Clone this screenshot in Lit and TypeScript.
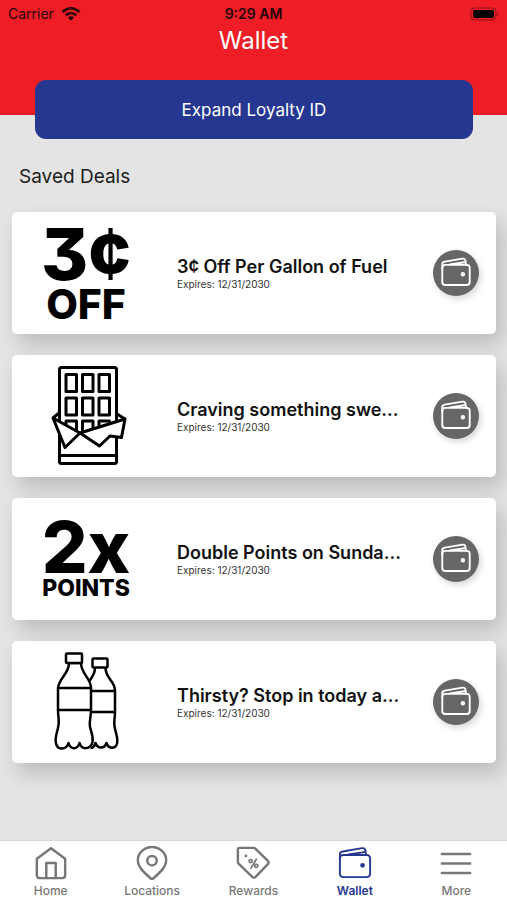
import { LitElement, html, css, svg, nothing } from "lit";
import { customElement, property } from "lit/decorators.js";

type Art = "cents" | "chocolate" | "points" | "bottles";
interface Deal {
  title: string;
  expires: string;
  art: Art;
}

const DEALS: Deal[] = [
  { title: "3¢ Off Per Gallon of Fuel", expires: "12/31/2030", art: "cents" },
  { title: "Craving something swe...", expires: "12/31/2030", art: "chocolate" },
  { title: "Double Points on Sunda...", expires: "12/31/2030", art: "points" },
  { title: "Thirsty? Stop in today a...", expires: "12/31/2030", art: "bottles" },
];

const wallet = svg`
  <rect x="2" y="9.500" width="32" height="23.500" rx="3.500"/>
  <path d="M2 14V8.500Q2 6.300 5 5.800L25.500 2.300q3-.4 3.500 2.200l.8 5"/>
  <path d="M11 9 28 6.500"/>
  <circle cx="26" cy="20.500" r="1.500" fill="currentColor"/>`;

const TABS = [
  {
    label: "Home",
    icon: svg`<path d="M3 13.500 18 2.500l15 11V31a3 3 0 0 1-3 3H6a3 3 0 0 1-3-3z"/><path d="M13 34V18h10v16"/>`,
  },
  {
    label: "Locations",
    icon: svg`<path d="M18 35.500C10 28.500 3 22.500 3 15a15 14 0 0 1 30 0C33 22.500 26 28.500 18 35.500z"/><circle cx="18" cy="15.500" r="5"/>`,
  },
  {
    label: "Rewards",
    icon: svg`<path d="M2 3.500a1.500 1.500 0 0 1 1.500-1.500H18a4 4 0 0 1 3 1.200L33.500 15.500a2.500 2.500 0 0 1 0 4L21 32.500a2.500 2.500 0 0 1-4 0L3 19A3.500 3.500 0 0 1 2 16.500z"/>
      <circle cx="10.500" cy="10.500" r="1.500" fill="currentColor" stroke="none"/><g stroke-width="1.800"><circle cx="15.500" cy="16" r="1.700"/><circle cx="21.500" cy="21" r="1.700"/><path d="M21.500 14 16 23.500"/></g>`,
  },
  { label: "Wallet", icon: wallet },
  { label: "More", icon: svg`<path d="M3 8.500h30M3 18.500h30M3 28.500h30"/>` },
];

@customElement("deal-card")
class DealCard extends LitElement {
  @property({ attribute: false }) deal!: Deal;

  static styles = css`
    :host {
      display: block;
    }
    .card {
      display: grid;
      grid-template-columns: 148px 1fr 46px;
      align-items: center;
      column-gap: 17px;
      height: 122px;
      padding-right: 17px;
      box-sizing: border-box;
      background: #fff;
      border-radius: 5px;
      box-shadow: 6px 10px 20px rgba(0, 0, 0, 0.18);
    }
    .art {
      display: flex;
      flex-direction: column;
      align-items: center;
      color: #000;
      font-weight: 800;
      white-space: nowrap;
    }
    .art svg {
      width: 120px;
      height: 122px;
    }
    .top {
      font-size: 72px;
      line-height: 58px;
      font-feature-settings: "cv09";
    }
    .cents-bottom {
      font-size: 41px;
      line-height: 34px;
      padding-top: 4px;
    }
    .points-bottom {
      font-size: 23px;
      line-height: 24px;
    }
    .text {
      min-width: 0;
    }
    h2 {
      margin: 0;
      font-size: 18px;
      line-height: 22px;
      font-weight: 600;
      color: #111;
      white-space: nowrap;
    }
    p {
      margin: 0;
      font-size: 10px;
      line-height: 12px;
      color: #333;
    }
    button {
      display: grid;
      place-items: center;
      width: 46px;
      height: 46px;
      padding: 0;
      border: 0;
      border-radius: 50%;
      background: #666;
      color: #fff;
      box-shadow: 2px 3px 6px rgba(0, 0, 0, 0.16);
    }
    button svg {
      width: 36px;
      height: 36px;
    }
  `;

  private art() {
    switch (this.deal.art) {
      case "cents":
        return html`<span class="top">3¢</span><span class="cents-bottom">OFF</span>`;
      case "points":
        return html`<span class="top">2x</span><span class="points-bottom">POINTS</span>`;
      case "chocolate":
        return html`<svg viewBox="27 355 120 122" fill="none" stroke="#000" stroke-width="3" stroke-linejoin="round" aria-hidden="true">
          <rect x="60.500" y="367.500" width="57" height="96" rx="2"/>
          <path d="M60.500 455.500h57"/>
          <path d="M67 374.500h10.500v17H67zM83.500 374.500H94v17H83.500zM100 374.500h10.500v17H100zM67 398h10.500v17H67zM83.500 398H94v17H83.500zM100 398h10.500v17H100zM67 421h10.500v16H67zM83.500 421H94v16H83.500zM100 421h10.500v16H100z"/>
          <path fill="#fff" stroke="none" d="m54 418 27 15 44-14v32H62z"/>
          <path d="M60.500 425v30M117.500 437v18"/>
          <path fill="#fff" d="m54 418 27 15-15 14.500z"/>
          <path fill="#fff" d="m81 433 45-14-3.500 18.500-11.500-1.500-10.500 10z"/>
          <path d="m54 418 6-5M118 414l8 5"/>
        </svg>`;
      case "bottles":
        return html`<svg viewBox="26 641 120 122" fill="none" stroke="#000" stroke-width="2.500" stroke-linejoin="round" aria-hidden="true">
          <rect x="92.500" y="658.500" width="15" height="9" rx="1"/>
          <path d="M95 668c0 6-3 9-5.500 13M105.500 668c0 10 9 13 9.500 22v22c0 9-2 9 0 17 1.500 7 4 11 1.500 16-2 4-8 4-10-2-2 6-9 6-11 0-1 3-3 5-5 5M91.500 691H115M91.500 712H115"/>
          <path fill="#fff" d="M69 663c0 11-10 15-11 25v22c0 9 2 10 0 18-1.500 7-4 11-1.500 17 2 5 10 5 12-2 2 7 9 7 11 0 2 7 11 7 13-1 1-6-1-9-2.500-15-1-7 1-9 1-17v-22c0-10-10-14-10-25z"/>
          <rect x="66" y="653.500" width="16" height="9.500" rx="1" fill="#fff"/>
          <path d="M58 688h33M58 710h33"/>
        </svg>`;
    }
    return nothing;
  }

  render() {
    return html`<article class="card">
      <div class="art">${this.art()}</div>
      <div class="text">
        <h2>${this.deal.title}</h2>
        <p>Expires: ${this.deal.expires}</p>
      </div>
      <button aria-label="Wallet: ${this.deal.title}">
        <svg viewBox="-3 -2 42 42" fill="none" stroke="currentColor" stroke-width="2.200" stroke-linejoin="round" stroke-linecap="round">${wallet}</svg>
      </button>
    </article>`;
  }
}

@customElement("app-root")
class AppRoot extends LitElement {
  static styles = css`
    :host {
      display: flex;
      flex-direction: column;
      min-height: 100vh;
      background: #e4e4e4;
      font-family: Inter, "Liberation Sans", sans-serif;
      color: #1c1c1c;
    }
    header {
      height: 115px;
      background: #ee1d26;
    }
    .status {
      display: grid;
      grid-template-columns: 1fr auto 1fr;
      align-items: center;
      height: 28px;
      padding: 0 8px;
      font-size: 14px;
      line-height: 20px;
      color: #240508;
    }
    .carrier {
      display: flex;
      align-items: center;
      gap: 7px;
    }
    .time {
      font-weight: 600;
    }
    .battery {
      justify-self: end;
    }
    h1 {
      margin: 0;
      font-size: 24px;
      line-height: 26px;
      font-weight: 400;
      text-align: center;
      color: #fff;
    }
    .expand {
      height: 59px;
      margin: -35px 34px 0 35px;
      border: 0;
      border-radius: 11px;
      background: #263791;
      color: #fff;
      font: inherit;
      font-size: 17px;
    }
    .heading {
      margin: 26px 19px 0;
      font-size: 19px;
      line-height: 24px;
      font-weight: 400;
    }
    main {
      display: flex;
      flex-direction: column;
      flex: 1;
    }
    .deals {
      display: grid;
      gap: 21px;
      margin: 23px 11px 32px 12px;
      padding: 0;
      list-style: none;
    }
    nav {
      display: grid;
      grid-template-columns: repeat(5, 1fr);
      height: 60px;
      background: #fff;
      border-top: 1px solid #d8d8d8;
      box-sizing: border-box;
    }
    .tab {
      display: flex;
      flex-direction: column;
      align-items: center;
      gap: 3px;
      padding-top: 5px;
      color: #777;
      font-size: 12px;
      line-height: 16px;
      font-weight: 500;
      text-decoration: none;
    }
    .tab svg {
      width: 34px;
      height: 34px;
      stroke-width: 2.6;
    }
    .tab.active {
      color: #263791;
      font-weight: 600;
    }
    .tab.active svg {
      stroke-width: 2;
    }
  `;

  render() {
    return html`
      <header>
        <div class="status">
          <span class="carrier">Carrier
            <svg width="20" height="16" viewBox="0 0 20 16" fill="none" stroke="currentColor" stroke-width="2.600" aria-label="Wi-Fi">
              <path d="M1.500 6Q10-1.500 18.500 6M4.800 9.300q5.200-4.600 10.400 0"/>
              <path fill="currentColor" stroke="none" d="M6.800 11.500q3.200-2.600 6.400 0L10 14.800z"/>
            </svg>
          </span>
          <span class="time">9:29 AM</span>
          <svg class="battery" width="30" height="14" viewBox="0 0 30 14" aria-label="Battery full">
            <rect x="2" y="1" width="25" height="12" rx="3.500" fill="none" stroke="#8e1218"/>
            <rect x="4" y="3" width="21" height="8" rx="2" fill="#000"/>
            <path d="M28.500 5q2 2 0 4z" fill="#8e1218"/>
          </svg>
        </div>
        <h1>Wallet</h1>
      </header>
      <main>
        <button class="expand">Expand Loyalty ID</button>
        <h2 class="heading">Saved Deals</h2>
        <ul class="deals">
          ${DEALS.map((d) => html`<li><deal-card .deal=${d}></deal-card></li>`)}
        </ul>
      </main>
      <nav>
        ${TABS.map(
          (t) => html`<a class="tab ${t.label === "Wallet" ? "active" : ""}" href="#${t.label.toLowerCase()}">
            <svg viewBox="0 0 36 36" fill="none" stroke="currentColor" stroke-linejoin="round" stroke-linecap="round" aria-hidden="true">${t.icon}</svg>
            <span>${t.label}</span>
          </a>`,
        )}
      </nav>
    `;
  }
}
